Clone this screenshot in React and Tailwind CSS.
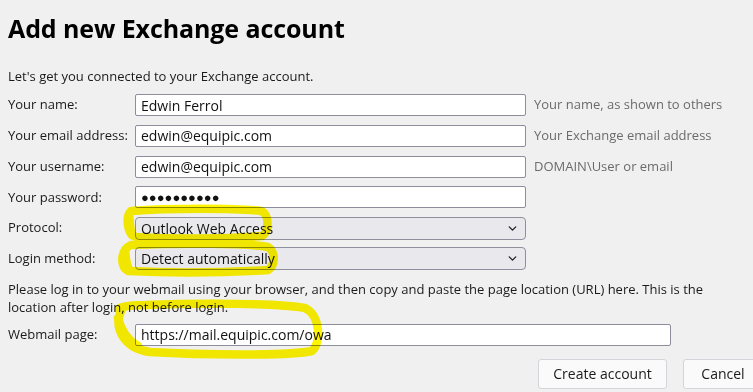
import { ChevronDown } from 'lucide-react'

const font = { fontFamily: '"Open Sans", "Noto Sans", sans-serif' }

function Row({ label, children, hint }) {
  return (
    <div className="flex h-[22px] items-center">
      <div className="w-[127px] shrink-0 text-[13px] text-[#1a1a1a]">{label}</div>
      {children}
      {hint ? (
        <div className="ml-[8px] whitespace-nowrap text-[13px] text-[#6b6b6b]">{hint}</div>
      ) : null}
    </div>
  )
}

function TextBox({ value, wide }) {
  return (
    <div
      className={
        (wide ? 'w-[536px]' : 'w-[391px]') +
        ' flex h-[22px] shrink-0 items-center rounded-[2px] border border-[#8d8d9b] bg-white pl-[5px] text-[14px] text-[#111]'
      }
    >
      {value}
    </div>
  )
}

function Select({ value }) {
  return (
    <div className="flex h-[23px] w-[391px] shrink-0 items-center justify-between rounded-[4px] border border-[#8f8f9d] bg-[#e9e9ed] pl-[5px] pr-[6px] text-[14px] text-[#111]">
      <span>{value}</span>
      <ChevronDown className="h-[13px] w-[13px] text-[#222]" strokeWidth={2.5} />
    </div>
  )
}

export default function App() {
  return (
    <div className="relative h-[392px] w-[753px] overflow-hidden bg-[#f0f0f0]" style={font}>
      <div className="pl-[8px] pt-[10px]">
        <h1 className="text-[25px] font-bold leading-[36px] tracking-[-0.1px] text-black">
          Add new Exchange account
        </h1>
        <p className="mt-[21px] text-[13px] leading-[18px] text-[#1a1a1a]">
          Let's get you connected to your Exchange account.
        </p>
        <div className="mt-[9px] flex flex-col gap-[8.8px]">
          <Row label="Your name:" hint="Your name, as shown to others">
            <TextBox value="Edwin Ferrol" />
          </Row>
          <Row label="Your email address:" hint="Your Exchange email address">
            <TextBox value="edwin@equipic.com" />
          </Row>
          <Row label="Your username:" hint="DOMAIN\User or email">
            <TextBox value="edwin@equipic.com" />
          </Row>
          <Row label="Your password:">
            <TextBox value={<span className="text-[13px]">●●●●●●●●●●</span>} />
          </Row>
          <Row label="Protocol:">
            <Select value="Outlook Web Access" />
          </Row>
          <Row label="Login method:">
            <Select value="Detect automatically" />
          </Row>
        </div>
        <p className="mt-[10px] w-[730px] text-[13px] leading-[18px] text-[#1a1a1a]">
          Please log in to your webmail using your browser, and then copy and paste the page
          location (URL) here. This is the location after login, not before login.
        </p>
        <div className="mt-[8px]">
          <Row label="Webmail page:">
            <TextBox value="https://mail.equipic.com/owa" wide />
          </Row>
        </div>
        <div className="mt-[13px] flex justify-end gap-[16px]">
          <button className="h-[30px] w-[129px] rounded-[3px] border border-[#d4d4da] bg-[#fafafa] text-[14px] text-[#1a1a1a]">
            Create account
          </button>
          <button className="-mr-[10px] h-[30px] w-[80px] rounded-[3px] border border-[#d4d4da] bg-[#fafafa] text-[14px] text-[#1a1a1a]">
            Cancel
          </button>
        </div>
      </div>

      {/* marker scribbles drawn over the form */}
      <svg
        className="pointer-events-none absolute inset-0 mix-blend-multiply"
        width="753"
        height="392"
        viewBox="0 0 753 392"
        fill="none"
        stroke="#fff500"
        strokeWidth="8.5"
        strokeLinecap="round"
        strokeLinejoin="round"
      >
        <path d="M131 211 C170 208 235 208 261 211 C270 214 269 232 262 236 C220 239 170 239 136 237 C126 234 126 216 131 211" />
        <path d="M129 215 C130 222 130 230 132 235" />
        <path d="M131 245 C180 243 245 243 268 247 C276 252 275 266 268 270 C220 273 170 273 128 271 C120 266 120 250 131 245" />
        <path d="M125 251 C126 258 126 265 129 269" />
        <path d="M121 311 C114 308 126 305 145 305 C200 303 280 303 305 308 C321 316 321 344 312 351 C290 356 200 355 150 352 C126 349 113 330 121 311" />
        <path d="M118 318 C121 330 127 340 138 346" />
      </svg>
    </div>
  )
}
